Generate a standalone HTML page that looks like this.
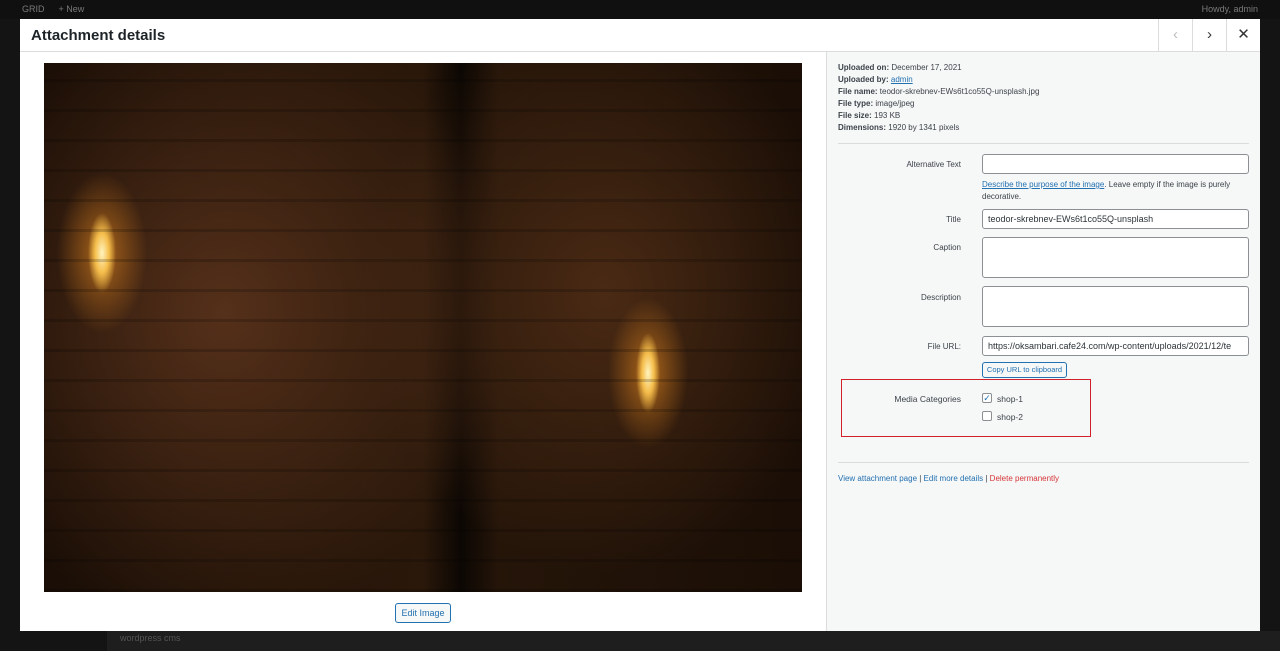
<!DOCTYPE html>
<html><head><style>
*{box-sizing:border-box;margin:0;padding:0}
body{width:1280px;height:651px;overflow:hidden;background:#141414;font-family:"Liberation Sans",sans-serif;position:relative}
.bar{position:absolute;top:0;left:0;width:1280px;height:19px;background:#101010;color:#7a7a7a;font-size:9px;line-height:19px}
.side{position:absolute;top:19px;left:0;width:107px;height:632px;background:#141414}
.foot{position:absolute;left:107px;top:631px;width:1173px;height:20px;background:#1e1e1e;color:#555;font-size:9px;padding:2px 13px}
.modal{position:absolute;left:20px;top:19px;width:1240px;height:612px;background:#fff}
.hdr{height:33px;border-bottom:1px solid #dcdcde;position:relative}
.hdr h1{font-size:15px;color:#1d2327;position:absolute;left:11px;top:8px}
.nb{position:absolute;top:0;width:34px;height:33px;border-left:1px solid #dcdcde;text-align:center;line-height:32px;font-size:15px;color:#333}
.img{position:absolute;left:24px;top:44px;width:758px;height:529px;overflow:hidden;background:
radial-gradient(ellipse 14px 40px at 58px 190px,#fff4c0,rgba(255,200,80,.9) 50%,transparent 100%),
radial-gradient(ellipse 45px 80px at 58px 190px,rgba(220,130,30,.7),transparent 100%),
radial-gradient(ellipse 12px 40px at 604px 310px,#fff4c0,rgba(255,200,80,.9) 50%,transparent 100%),
radial-gradient(ellipse 40px 75px at 604px 310px,rgba(220,130,30,.7),transparent 100%),
radial-gradient(ellipse 280px 320px at 180px 250px,#55301a,transparent),
radial-gradient(ellipse 240px 280px at 560px 230px,#4a2a14,transparent),
linear-gradient(90deg,#1a0e06 0,#2a180a 50%,#0c0703 55%,#251509 60%,#1a0e06 100%)}
.brick{position:absolute;inset:0;background:repeating-linear-gradient(0deg,rgba(0,0,0,.18) 0 3px,transparent 3px 30px);}
.rp{position:absolute;left:806px;top:33px;width:434px;height:579px;background:#f6f7f7;border-left:1px solid #dcdcde;font-size:8px;color:#3c434a}
.meta{position:absolute;left:11px;top:10px;line-height:12px}
.lbl{position:absolute;right:299px;text-align:right;white-space:nowrap}
.in{position:absolute;left:155px;width:267px;background:#fff;border:1px solid #8c8f94;border-radius:3px;font-size:9px;color:#2c3338;padding:4px 5px;overflow:hidden;white-space:nowrap}
a{color:#2271b1}
</style></head><body>
<div class="bar"><span style="margin-left:22px">GRID</span><span style="margin-left:14px">+ New</span><span style="position:absolute;right:22px">Howdy, admin</span></div>
<div class="side"></div>
<div class="foot">wordpress cms</div>
<div class="modal">
<div class="hdr"><h1>Attachment details</h1>
<div class="nb" style="right:68px;color:#bbb">&#8249;</div><div class="nb" style="right:34px">&#8250;</div><div class="nb" style="right:0">&#10005;</div></div>
<div class="img"><div class="brick"></div></div>
<div style="position:absolute;left:375px;top:584px;width:56px;height:20px;border:1px solid #2271b1;border-radius:3px;color:#2271b1;font-size:9px;text-align:center;line-height:18px;background:#f6f7f7">Edit Image</div>
<div class="rp">
<div class="meta"><b>Uploaded on:</b> December 17, 2021<br><b>Uploaded by:</b> <a style="text-decoration:underline">admin</a><br><b>File name:</b> teodor-skrebnev-EWs6t1co55Q-unsplash.jpg<br><b>File type:</b> image/jpeg<br><b>File size:</b> 193 KB<br><b>Dimensions:</b> 1920 by 1341 pixels</div>
<div style="position:absolute;left:11px;top:91px;width:411px;border-top:1px solid #dcdcde"></div>
<div class="lbl" style="top:108px">Alternative Text</div><div class="in" style="top:102px;height:20px"></div>
<div style="position:absolute;left:155px;top:127px;line-height:12px;width:270px"><a style="text-decoration:underline">Describe the purpose of the image</a>. Leave empty if the image is purely decorative.</div>
<div class="lbl" style="top:163px">Title</div><div class="in" style="top:157px;height:20px">teodor-skrebnev-EWs6t1co55Q-unsplash</div>
<div class="lbl" style="top:191px">Caption</div><div class="in" style="top:185px;height:41px"></div>
<div class="lbl" style="top:241px">Description</div><div class="in" style="top:234px;height:41px"></div>
<div class="lbl" style="top:290px">File URL:</div><div class="in" style="top:284px;height:20px">https://oksambari.cafe24.com/wp-content/uploads/2021/12/te</div>
<div style="position:absolute;left:155px;top:310px;height:16px;width:85px;border:1px solid #2271b1;border-radius:3px;color:#2271b1;font-size:7.5px;text-align:center;line-height:14px">Copy URL to clipboard</div>
<div style="position:absolute;left:14px;top:327px;width:250px;height:58px;border:1.5px solid #d0202a"></div>
<div class="lbl" style="top:342px;font-size:8.5px">Media Categories</div>
<div style="position:absolute;left:155px;top:341px;width:10px;height:10px;border:1px solid #8c8f94;border-radius:2px;background:#fff;font-size:9px;line-height:8px;color:#2271b1;text-align:center">&#10003;</div>
<div style="position:absolute;left:170px;top:342px;font-size:8.5px">shop-1</div>
<div style="position:absolute;left:155px;top:359px;width:10px;height:10px;border:1px solid #8c8f94;border-radius:2px;background:#fff"></div>
<div style="position:absolute;left:170px;top:360px;font-size:8.5px">shop-2</div>
<div style="position:absolute;left:11px;top:410px;width:411px;border-top:1px solid #dcdcde"></div>
<div style="position:absolute;left:11px;top:422px"><a>View attachment page</a> | <a>Edit more details</a> | <a style="color:#d63638">Delete permanently</a></div>
</div>
</div>
</body></html>
